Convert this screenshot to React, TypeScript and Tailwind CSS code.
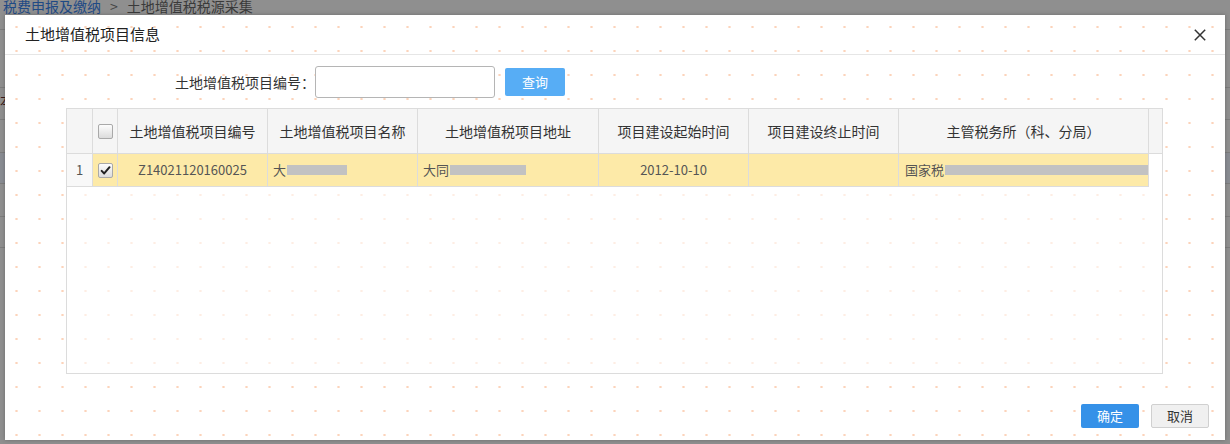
const font = "font-['Microsoft_YaHei','Noto_Sans_CJK_SC',sans-serif]";

const columns = [
    "土地增值税项目编号",
    "土地增值税项目名称",
    "土地增值税项目地址",
    "项目建设起始时间",
    "项目建设终止时间",
    "主管税务所（科、分局）",
];

function Checkbox({ checked }: { checked?: boolean }) {
    return (
        <div className="flex size-[15px] items-center justify-center rounded-[2px] border border-[#a9a9a9] bg-gradient-to-b from-[#fdfdfd] to-[#dcdcdc]">
            {checked && (
                <svg viewBox="0 0 12 12" className="size-[11px]">
                    <path
                        d="M1.8 6.4 L4.6 9.2 L10.4 2.4"
                        fill="none"
                        stroke="#222"
                        strokeWidth="2.2"
                        strokeLinecap="round"
                        strokeLinejoin="round"
                    />
                </svg>
            )}
        </div>
    );
}

function Masked({ lead, width }: { lead: string; width: number }) {
    return (
        <span className="flex items-center">
            <span>{lead}</span>
            <span
                className="ml-[1px] inline-block h-[10px] bg-[#c2c2c2]"
                style={{ width }}
            />
        </span>
    );
}

export default function App() {
    return (
        <div className={`relative h-[444px] w-[1230px] overflow-hidden bg-[#8f8f8f] ${font}`}>
            {/* page behind the dialog */}
            <div className="absolute -top-[3px] left-[3px] flex items-center gap-[9px] text-[14px] leading-[18px]">
                <span className="text-[#1f4a85]">税费申报及缴纳</span>
                <span className="text-[#444]">&gt;</span>
                <span className="text-[#3a3a3a]">土地增值税税源采集</span>
            </div>
            <div className="flex flex-col pt-[29px]">
                <div className="h-[58px] border-t border-[#7d7d7d]" />
                <div className="h-[32px] border-t border-[#7d7d7d] text-[14px] leading-[24px] text-[#3a1a1a]">
                    本
                </div>
                <div className="h-[33px] border-t border-[#7d7d7d]" />
                <div className="h-[31px] border-t border-[#7d7d7d] bg-[#898c92]" />
                <div className="h-[33px] border-t border-[#7d7d7d]" />
                <div className="h-[31px] border-t border-[#7d7d7d]" />
                <div className="h-[32px] border-t border-[#7d7d7d]" />
            </div>

            {/* dialog */}
            <div className="absolute left-[5px] top-[15px] flex h-[425px] w-[1220px] flex-col bg-white bg-[radial-gradient(circle,#fcd3ba_1px,transparent_1.3px)] bg-[size:23px_24px] shadow-[0_0_4px_rgba(0,0,0,0.25)]">
                <div className="flex h-[40px] shrink-0 items-center justify-between border-b border-[#e6e6e6] pl-[20px] pr-[19px]">
                    <span className="text-[15px] text-[#222]">土地增值税项目信息</span>
                    <svg viewBox="0 0 12 12" className="size-[12px]">
                        <path
                            d="M0.8 0.8 L11.2 11.2 M11.2 0.8 L0.8 11.2"
                            stroke="#333"
                            strokeWidth="1.5"
                        />
                    </svg>
                </div>

                <div className="flex items-center pl-[170px] pt-[11px] text-[14px] text-[#333]">
                    <span>土地增值税项目编号：</span>
                    <div className="h-[32px] w-[180px] rounded-[3px] border border-[#b5b5b5] bg-white" />
                    <button className="ml-[10px] h-[28px] w-[60px] rounded-[2px] bg-[#57adf5] text-[13px] text-white">
                        查询
                    </button>
                </div>

                <div className="ml-[61px] mt-[10px] h-[266px] w-[1097px] border border-[#dcdcdc] bg-white/60 text-[13px]">
                    <div className="grid h-[45px] grid-cols-[26px_25px_150px_150px_181px_150px_150px_250px_1fr] border-b border-[#dcdcdc] bg-[#f5f5f5] text-[14px] text-[#333]">
                        <div className="border-r border-[#dcdcdc]" />
                        <div className="flex items-center justify-center border-r border-[#dcdcdc]">
                            <Checkbox />
                        </div>
                        {columns.map((c) => (
                            <div
                                key={c}
                                className="flex items-center justify-center border-r border-[#dcdcdc]"
                            >
                                {c}
                            </div>
                        ))}
                        <div />
                    </div>
                    <div className="grid h-[33px] grid-cols-[26px_25px_150px_150px_181px_150px_150px_250px_1fr] text-[13px] text-[#555]">
                        <div className="flex items-center justify-center border-r border-b border-[#dcdcdc] bg-[#f8f8f8]">
                            1
                        </div>
                        <div className="flex items-center justify-center border-r border-b border-[#dcdcdc] bg-[#fdeaa8]">
                            <Checkbox checked />
                        </div>
                        <div className="flex items-center justify-center border-r border-b border-[#dcdcdc] bg-[#fdeaa8]">
                            Z14021120160025
                        </div>
                        <div className="flex items-center border-r border-b border-[#dcdcdc] bg-[#fdeaa8] pl-[5px]">
                            <Masked lead="大" width={60} />
                        </div>
                        <div className="flex items-center border-r border-b border-[#dcdcdc] bg-[#fdeaa8] pl-[5px]">
                            <Masked lead="大同" width={76} />
                        </div>
                        <div className="flex items-center justify-center border-r border-b border-[#dcdcdc] bg-[#fdeaa8]">
                            2012-10-10
                        </div>
                        <div className="border-r border-b border-[#dcdcdc] bg-[#fdeaa8]" />
                        <div className="flex items-center overflow-hidden whitespace-nowrap border-r border-b border-[#dcdcdc] bg-[#fdeaa8] pl-[6px]">
                            <Masked lead="国家税" width={210} />
                        </div>
                        <div />
                    </div>
                </div>

                <div className="mt-auto flex justify-end gap-[12px] pb-[12px] pr-[16px]">
                    <button className="h-[24px] w-[58px] rounded-[2px] bg-[#3591e8] text-[13px] text-white">
                        确定
                    </button>
                    <button className="h-[24px] w-[58px] rounded-[2px] border border-[#d0d0d0] bg-[#f0f0f0] text-[13px] text-[#333]">
                        取消
                    </button>
                </div>
            </div>
        </div>
    );
}
